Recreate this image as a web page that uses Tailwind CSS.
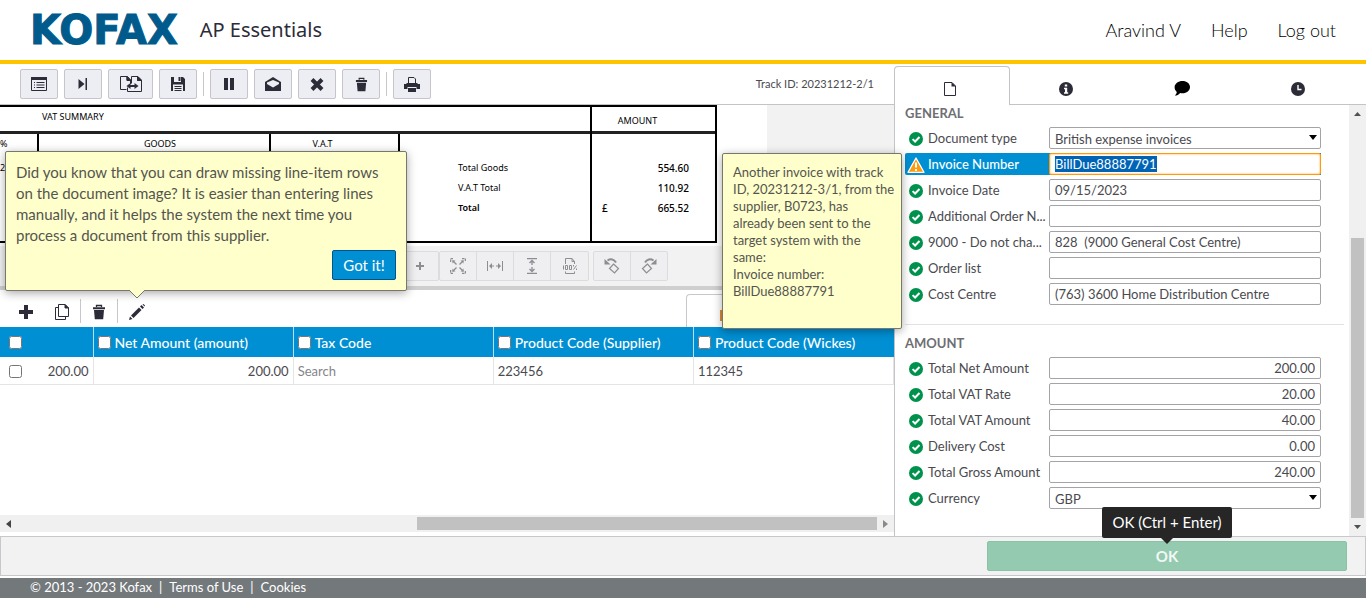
<!DOCTYPE html>
<html lang="en">
<head>
<meta charset="utf-8">
<title>AP Essentials</title>
<script src="https://cdn.jsdelivr.net/npm/@tailwindcss/browser@4"></script>
</head>
<body class="flex h-screen flex-col overflow-hidden bg-white font-['Lato','Open_Sans',sans-serif] text-[13px] text-[#4a4a4f]">
<svg class="hidden">
  <symbol id="ok" viewBox="0 0 14 14"><circle cx="7" cy="7" r="7" fill="#00914d"/><path d="M3.6 7.1 6.1 9.5 10.5 5" fill="none" stroke="#fff" stroke-width="2"/></symbol>
  <symbol id="trash" viewBox="0 0 14 16"><path d="M1 3.2h12v2H1zM2 6h10l-.8 9.2H2.8z" fill="#2c2c38"/><path d="M4.5 3V1.5h5V3" fill="none" stroke="#2c2c38" stroke-width="1.3"/></symbol>
  <symbol id="rot" viewBox="0 0 18 18"><path d="M10.500 7 15.500 11.500 11.500 16 6.500 11.500z" fill="none" stroke="#8d8d92" stroke-width="1.200"/><path d="M13 5.500C11 2 7.500 1.500 4.500 3.500" fill="none" stroke="#8d8d92" stroke-width="2"/><path d="M1.500 2v5.500h6z" fill="#8d8d92"/></symbol>
</svg>

<header class="flex h-16 shrink-0 items-center border-b-4 border-[#ffc400] px-[30px] text-[#2c2c38]">
  <div class="font-['DejaVu_Sans',sans-serif] text-[40px] leading-none font-bold text-[#005b8c] [-webkit-text-stroke:1px_#005b8c]">KOFAX</div>
  <h1 class="ml-[22px] font-['Noto_Sans',sans-serif] text-xl">AP Essentials</h1>
  <nav class="ml-auto flex gap-[30px] text-[18px] font-light text-black">
    <a href="#">Aravind V</a><a href="#">Help</a><a href="#">Log out</a>
  </nav>
</header>

<main class="flex min-h-0 flex-1">
  <section class="relative flex min-w-0 flex-1 flex-col">
    <div class="flex h-[41px] shrink-0 items-center gap-[6px] border-b border-[#c4c4c8] pr-5 pl-5">
      <button aria-label="List" class="grid h-[30px] w-[38px] place-items-center rounded-xs border border-[#c6c6ca] bg-[#edeef4]"><svg class="size-4" viewBox="0 0 16 16" fill="none" stroke="#2c2c38"><path d="M.5 1.5h15v13H.5z"/><path d="M0 2.5h16" stroke-width="3"/><path d="M3 6.5h1M5.5 6.5h8M3 9h1M5.5 9h8M3 11.5h1M5.500 11.5h8"/></svg></button>
      <button aria-label="Next" class="grid h-[30px] w-[38px] place-items-center rounded-xs border border-[#c6c6ca] bg-[#edeef4]"><svg class="h-3 w-[10px]" viewBox="0 0 10 12" fill="#2c2c38"><path d="M.5 1v10L6.500 6zM7.500 0h1.500v12H7.500z"/></svg></button>
      <button aria-label="Transfer" class="grid h-[30px] w-[45px] place-items-center rounded-xs border border-[#c6c6ca] bg-[#edeef4]"><svg class="h-4 w-[22px]" viewBox="0 0 22 16" fill="none" stroke="#2c2c38"><path d="M10.500 8V4L7.500.5h-7v13h6M7 1v3.500h3.500M7.500 11.500v4h14V4L18 .5h-6.500v7M17.500 1v3.500h4"/><path d="M7 .5v4h4zM17.500.5v4h4z" fill="#2c2c38"/><path d="M8 10h9" stroke-width="2"/><path d="M10.500 7v6L6.500 10zM14.500 7v6l4-3z" fill="#2c2c38" stroke="none"/></svg></button>
      <button aria-label="Save" class="grid h-[30px] w-[38px] place-items-center rounded-xs border border-[#c6c6ca] bg-[#edeef4]"><svg class="size-[14px]" viewBox="0 0 14 14"><path d="M0 0h3v5h7V0h2l2 2v12h-2V7.500H2V14H0z" fill="#2c2c38"/><path d="M7.500 0h2v4h-2z" fill="#2c2c38"/><path d="M3.500 9.500h7M3.500 11.500h7M3.500 13.500h7" stroke="#2c2c38"/></svg></button>
      <span class="h-6 w-px bg-[#c8c8cc]"></span>
      <button aria-label="Pause" class="grid h-[30px] w-[38px] place-items-center rounded-xs border border-[#c6c6ca] bg-[#edeef4]"><svg class="h-3 w-[10px]" viewBox="0 0 10 12" fill="#2c2c38"><path d="M0 0h4v12H0zM6 0h4v12H6z"/></svg></button>
      <button aria-label="Mail" class="grid h-[30px] w-[38px] place-items-center rounded-xs border border-[#c6c6ca] bg-[#edeef4]"><svg class="h-[14px] w-4" viewBox="0 0 16 14" fill="#2c2c38"><path d="M0 5 8 0l8 5v9H0z"/><path d="M2 5.500 8 3l6 2.500V7l-6 3.500L2 7z" fill="#edeef4"/></svg></button>
      <button aria-label="Reject" class="grid h-[30px] w-[38px] place-items-center rounded-xs border border-[#c6c6ca] bg-[#edeef4]"><svg class="h-[13px] w-[14px]" viewBox="0 0 14 13"><path d="M2 1.500 12 11.500M12 1.500 2 11.500" stroke="#2c2c38" stroke-width="4"/></svg></button>
      <button aria-label="Delete" class="grid h-[30px] w-[38px] place-items-center rounded-xs border border-[#c6c6ca] bg-[#edeef4]"><svg class="h-[15px] w-[13px]"><use href="#trash"/></svg></button>
      <span class="h-6 w-px bg-[#c8c8cc]"></span>
      <button aria-label="Print" class="grid h-[30px] w-[38px] place-items-center rounded-xs border border-[#c6c6ca] bg-[#edeef4]"><svg class="h-[15px] w-4" viewBox="0 0 16 15"><path d="M4.500 6V.5H10L11.500 2v4" fill="none" stroke="#2c2c38"/><path d="M0 7h2.500V6h11v1H16v5h-3.500v-2h-9v2H0zM4 11h8v4H4z" fill="#2c2c38"/></svg></button>
      <span class="ml-auto text-[11px]">Track ID: 20231212-2/1</span>
    </div>

    <div class="h-[141px] shrink-0 overflow-hidden bg-[#f2f2f2] font-['Noto_Sans',sans-serif] text-[10px] leading-3 text-black">
      <div class="h-full w-[767px] bg-white">
        <div class="flex h-[138px] w-[717px] border-2 border-l-0 border-black">
          <div class="flex flex-1 flex-col">
            <div class="h-[27px] border-b-[3px] border-[#222] pt-1 pl-[42px] text-[9px]">VAT SUMMARY</div>
            <div class="flex flex-1">
              <div class="w-[39px] border-r-2 border-black pt-1 text-[9px]">%<div class="mt-3">20</div></div>
              <div class="w-[232px] border-r-2 border-black pt-1 pl-3 text-center text-[9px]">GOODS</div>
              <div class="w-[129px] border-r-2 border-black pt-1 pr-6 text-center text-[9px]">V.A.T</div>
              <div class="flex flex-col pt-6 pl-[58px] text-[9px] leading-5"><span>Total Goods</span><span>V.A.T Total</span><b class="font-semibold">Total</b></div>
            </div>
          </div>
          <div class="w-[125px] border-l-2 border-black">
            <div class="h-[27px] border-b-[3px] border-[#222] pt-2 pr-8 text-center text-[9px]">AMOUNT</div>
            <div class="flex flex-col pt-6 pr-[26px] text-right leading-5 font-medium"><span>554.60</span><span>110.92</span><span class="flex justify-between pl-[10px]"><span>£</span><span>665.52</span></span></div>
          </div>
        </div>
      </div>
    </div>

    <div class="flex h-11 shrink-0 items-center border-b-4 border-[#cfcfcf] bg-[#f2f2f2] pl-[401px] text-[#8d8d92]">
      <button aria-label="Zoom in" class="grid h-[30px] w-[38px] place-items-center rounded-xs border border-[#dcdce0] bg-[#efeff2]"><svg class="size-2" viewBox="0 0 8 8" stroke="currentColor" stroke-width="2"><path d="M4 0v8M0 4h8"/></svg></button>
      <div class="flex h-[30px] divide-x divide-[#dcdce0] rounded-xs border border-[#dcdce0] bg-[#efeff2]">
        <button aria-label="Fit page" class="grid w-[37px] place-items-center"><svg class="size-4" viewBox="0 0 16 16" fill="none" stroke="currentColor" stroke-width="1.300"><path d="M.6 4V.6H4M12 .6h3.400V4M.6 12v3.400H4M12 15.400h3.400V12" stroke-dasharray="2.400 1"/><path d="m2.500 2.500 4 4M13.500 2.500l-4 4M2.500 13.500l4-4M13.500 13.500l-4-4"/><path d="M2.500 2.500h3l-3 3zM13.500 2.500v3l-3-3zM2.500 13.500v-3l3 3zM13.500 13.500h-3l3-3z" fill="currentColor" stroke="none"/></svg></button>
        <button aria-label="Fit width" class="grid w-[37px] place-items-center"><svg class="h-3 w-4" viewBox="0 0 16 12" fill="none" stroke="currentColor"><path d="M.5 1v10M15.500 1v10M3 6h4M9 6h4" /><path d="M5 3v6L2 6zM11 3v6l3-3z" fill="currentColor" stroke="none"/></svg></button>
        <button aria-label="Fit height" class="grid w-[37px] place-items-center"><svg class="h-4 w-3" viewBox="0 0 12 16" fill="none" stroke="currentColor"><path d="M1 .6h10M1 15.400h10" stroke-width="1.400"/><path d="M6 3v4M6 9v4M3.500 5 6 2.500 8.500 5M3.500 11 6 13.500 8.500 11" stroke-width="1.300"/></svg></button>
        <button aria-label="Actual size" class="grid w-[37px] place-items-center"><svg class="size-4" viewBox="0 0 16 16" fill="none" stroke="currentColor"><path d="M3.500 6V.5h6.500l2.500 3V6M10 .5v3h2.500M3.500 13.500v2h9v-2"/><path d="M1.500 7.500v4M3.500 7.500h2v4h-2zM7.500 7.500h2v4h-2zM11.500 11.500l3-4M11.500 7v1.500M14.500 10.500V12"/></svg></button>
      </div>
      <div class="ml-1 flex h-[30px] divide-x divide-[#dcdce0] rounded-xs border border-[#dcdce0] bg-[#efeff2]">
        <button aria-label="Rotate left" class="grid w-[37px] place-items-center"><svg class="size-[18px]"><use href="#rot"/></svg></button>
        <button aria-label="Rotate right" class="grid w-[36px] place-items-center"><svg class="size-[18px] -scale-x-100"><use href="#rot"/></svg></button>
      </div>
    </div>

    <div class="flex h-[37px] shrink-0 items-center pl-[19px]">
      <button aria-label="Add row" class="mt-[6px]"><svg class="size-[14px]" viewBox="0 0 14 14" stroke="#2c2c38" stroke-width="4"><path d="M7 0v14M0 7h14"/></svg></button>
      <button aria-label="Copy row" class="mt-[6px] ml-[22px]"><svg class="h-4 w-[14px]" viewBox="0 0 14 16" fill="none" stroke="#2c2c38"><path d="M3.500.5H10L13.500 4v8.500h-10z"/><path d="M3.500 3.500h-3v12h10v-3"/><path d="M10 .5V4h3.500z" fill="#2c2c38"/></svg></button>
      <span class="mt-1 ml-[11px] h-6 w-px bg-[#c8c8cc]"></span>
      <button aria-label="Delete row" class="mt-[6px] ml-[11px]"><svg class="h-4 w-[14px]"><use href="#trash"/></svg></button>
      <span class="mt-1 ml-[11px] h-6 w-px bg-[#c8c8cc]"></span>
      <button aria-label="Draw rows" class="mt-[6px] ml-[11px]"><svg class="size-4" viewBox="0 0 16 16" fill="#2c2c38"><path d="M0 16 1 12.500 3.500 15zM2 11.500 10 3.500 12.500 6 4.500 14zM11 2.500 12.500 1 15 3.500 13.500 5zM13.500.5l1-.5L16 1.500l-.5 1z"/></svg></button>
      <div class="mt-1 ml-auto flex h-[33px] w-52 items-center rounded-tl-sm border-t border-l border-[#c8c8cc] pl-[33px]"><span class="mt-2 h-[11px] w-4 border-l-2 border-[#e08a3c] bg-[#3a6c9c]"></span></div>
    </div>

    <table class="w-full shrink-0 table-fixed border-collapse">
      <colgroup><col class="w-[93px]"><col><col><col><col></colgroup>
      <thead>
        <tr class="h-[30px] bg-[#008fd3] text-left text-[14px] text-white">
          <th class="border-r border-[#b8dff2] pl-[9px]"><input type="checkbox" aria-label="Select all" class="block size-[13px]"></th>
          <th class="border-r border-[#b8dff2] pl-1 font-medium"><label class="flex items-center gap-1"><input type="checkbox" class="size-[13px]">Net Amount (amount)</label></th>
          <th class="border-r border-[#b8dff2] pl-1 font-medium"><label class="flex items-center gap-1"><input type="checkbox" class="size-[13px]">Tax Code</label></th>
          <th class="border-r border-[#b8dff2] pl-1 font-medium"><label class="flex items-center gap-1"><input type="checkbox" class="size-[13px]">Product Code (Supplier)</label></th>
          <th class="pl-1 font-medium"><label class="flex items-center gap-1"><input type="checkbox" class="size-[13px]">Product Code (Wickes)</label></th>
        </tr>
      </thead>
      <tbody>
        <tr class="h-[27px] border-b border-[#e4e4e6]">
          <td class="border-r border-[#e4e4e6] pt-[2px] pr-1 pl-[9px]"><div class="flex items-center justify-between"><input type="checkbox" aria-label="Select row" class="size-[13px]"><span>200.00</span></div></td>
          <td class="border-r border-[#e4e4e6] pt-[2px] pr-1 text-right">200.00</td>
          <td class="border-r border-[#e4e4e6] pt-[2px] pl-1 text-[#85858a]">Search</td>
          <td class="border-r border-[#e4e4e6] pt-[2px] pl-1">223456</td>
          <td class="border-r border-[#e4e4e6] pt-[2px] pl-1">112345</td>
        </tr>
      </tbody>
    </table>

    <div class="mt-auto mb-1 flex h-[17px] shrink-0 items-center bg-[#f0f0f0] px-[6px]">
      <svg class="h-2 w-[5px]" viewBox="0 0 5 8"><path d="M5 0v8L0 4z" fill="#444"/></svg>
      <span class="ml-auto h-[13px] w-[460px] bg-[#c1c1c1]"></span>
      <svg class="ml-[6px] h-2 w-[5px]" viewBox="0 0 5 8"><path d="M0 0v8l5-4z" fill="#8a8a8a"/></svg>
    </div>

    <div class="absolute top-[87px] left-[5px] flex h-[140px] w-[402px] flex-col rounded-xs border border-[#77776c] bg-[#ffffcc] p-[10px] shadow-[0_2px_10px_rgba(0,0,0,0.35)]">
      <p class="text-[15px] leading-[21px] whitespace-nowrap text-[#55554f]">Did you know that you can draw missing line-item rows<br>on the document image? It is easier than entering lines<br>manually, and it helps the system the next time you<br>process a document from this supplier.</p>
      <button class="mt-auto h-[30px] w-16 self-end rounded-xs border border-[#00568a] bg-[#008fd3] text-[15px] text-white">Got it!</button>
      <svg class="absolute top-full left-[123px] h-[9px] w-4" viewBox="0 0 16 9"><path d="M0 0 8 8l8-8" fill="#ffffcc" stroke="#77776c"/><path d="M1 0h14" stroke="#ffffcc" stroke-width="2"/></svg>
    </div>

    <div class="absolute top-[89px] right-[-8px] z-10 h-[176px] w-[180px] rounded-xs border border-[#77776c] bg-[#ffffcc] px-[10px] py-[10px] text-[13px] leading-[17px] whitespace-nowrap text-[#55554f] shadow-[0_2px_10px_rgba(0,0,0,0.35)]">Another invoice with track<br>ID, 20231212-3/1, from the<br>supplier, B0723, has<br>already been sent to the<br>target system with the<br>same:<br>Invoice number:<br>BillDue88887791</div>
  </section>

  <aside class="flex w-[472px] shrink-0 flex-col">
    <div class="grid h-[41px] shrink-0 grid-cols-4 border-b border-[#c4c4c8] pt-[2px] pr-2">
      <button aria-label="Document" class="-mb-px grid place-items-center rounded-t-sm border border-b-0 border-[#c4c4c8] bg-white pt-[6px] pr-1"><svg class="h-[14px] w-3" viewBox="0 0 12 14"><path d="M.5.5H8L11.500 4v9.500H.5z" fill="none" stroke="#2c2c38"/><path d="M7.500 0v4.500H12z" fill="#2c2c38"/></svg></button>
      <button aria-label="Info" class="grid place-items-center pt-2 pr-1"><svg class="size-[14px]" viewBox="0 0 14 14"><circle cx="7" cy="7" r="7" fill="#2c2c38"/><path d="M5.800 2.500h2.400v2H5.800zM5 5.800h3.200v4.400h1v1.500H5v-1.500h1V7.200H5z" fill="#fff"/></svg></button>
      <button aria-label="Comments" class="grid place-items-center pt-[6px] pr-1"><svg class="h-[15px] w-4" viewBox="0 0 16 15"><path d="M8.500 0C12.700 0 16 2.600 16 6s-3.300 6.300-7.500 6.300c-.8 0-1.600-.1-2.300-.3C4.800 13.600 3 14.600.8 14.600c1.200-1.200 1.800-2.400 2-3.700C1.200 9.700.6 8 .6 6.100.6 2.700 4.300 0 8.500 0z"/></svg></button>
      <button aria-label="History" class="grid place-items-center pt-2 pr-1"><svg class="size-[14px]" viewBox="0 0 14 14"><circle cx="7" cy="7" r="7" fill="#2c2c38"/><path d="M7 3v4.500h3.500" fill="none" stroke="#fff" stroke-width="1.400"/></svg></button>
    </div>
    <div class="flex min-h-0 flex-1 border-l border-[#c4c4c8]">
      <form class="min-w-0 flex-1 pr-[5px] pl-[10px]">
        <h2 class="flex h-[22px] items-center pb-1 text-[13px] font-bold text-[#6e6e73]">GENERAL</h2>
        <div class="flex flex-col gap-1 border-b border-[#e2e2e4] pr-[23px] pb-[19px]">
          <div class="flex h-[22px] items-center"><svg class="mx-1 mt-[2px] size-[14px] shrink-0"><use href="#ok"/></svg><label for="f1" class="min-w-0 flex-1 pt-[2px] pl-px">Document type</label><div class="relative w-[272px]"><select id="f1" class="block h-[22px] w-full appearance-none rounded-xs border border-[#a4a4a8] bg-white px-[5px] pt-[2px]"><option>British expense invoices</option></select><svg class="pointer-events-none absolute top-2 right-1 h-[5px] w-2" viewBox="0 0 8 5"><path d="M0 0h8L4 5z"/></svg></div></div>
          <div class="flex h-[22px] items-center rounded-l-xs bg-[#008fd3] text-white"><svg class="mx-[2px] mt-[2px] h-4 w-[18px] shrink-0" viewBox="0 0 18 16"><path d="M9 1 17 15.300H1z" fill="#ff9a0c" stroke="#fff" stroke-width="1.300" stroke-linejoin="round"/><path d="M9 5.500v5M9 12v2" stroke="#fff" stroke-width="2"/></svg><label for="f2" class="min-w-0 flex-1 pt-[2px] pl-px font-medium">Invoice Number</label><input id="f2" value="BillDue88887791" class="h-[22px] w-[272px] rounded-xs border border-[#ff9a0c] bg-white px-[5px] text-[#4a4a4f] shadow-[inset_0_0_2px_#ff9a0c] outline-none selection:bg-[#0064b6] selection:text-white"></div>
          <div class="flex h-[22px] items-center"><svg class="mx-1 mt-[2px] size-[14px] shrink-0"><use href="#ok"/></svg><label for="f3" class="min-w-0 flex-1 pt-[2px] pl-px">Invoice Date</label><input id="f3" value="09/15/2023" class="h-[22px] w-[272px] rounded-xs border border-[#a4a4a8] px-[5px]"></div>
          <div class="flex h-[22px] items-center"><svg class="mx-1 mt-[2px] size-[14px] shrink-0"><use href="#ok"/></svg><label for="f4" class="min-w-0 flex-1 pt-[2px] pl-px whitespace-nowrap">Additional Order N...</label><input id="f4" class="h-[22px] w-[272px] rounded-xs border border-[#a4a4a8] px-[5px]"></div>
          <div class="flex h-[22px] items-center"><svg class="mx-1 mt-[2px] size-[14px] shrink-0"><use href="#ok"/></svg><label for="f5" class="min-w-0 flex-1 pt-[2px] pl-px whitespace-nowrap">9000 - Do not cha...</label><input id="f5" value="828  (9000 General Cost Centre)" class="h-[22px] w-[272px] rounded-xs border border-[#a4a4a8] px-[5px]"></div>
          <div class="flex h-[22px] items-center"><svg class="mx-1 mt-[2px] size-[14px] shrink-0"><use href="#ok"/></svg><label for="f6" class="min-w-0 flex-1 pt-[2px] pl-px">Order list</label><input id="f6" class="h-[22px] w-[272px] rounded-xs border border-[#a4a4a8] px-[5px]"></div>
          <div class="flex h-[22px] items-center"><svg class="mx-1 mt-[2px] size-[14px] shrink-0"><use href="#ok"/></svg><label for="f7" class="min-w-0 flex-1 pt-[2px] pl-px">Cost Centre</label><input id="f7" value="(763) 3600 Home Distribution Centre" class="h-[22px] w-[272px] rounded-xs border border-[#a4a4a8] px-[5px]"></div>
        </div>
        <h2 class="flex h-8 items-center pt-[6px] text-[13px] font-bold text-[#6e6e73]">AMOUNT</h2>
        <div class="flex flex-col gap-1 pr-[23px]">
          <div class="flex h-[22px] items-center"><svg class="mx-1 mt-[2px] size-[14px] shrink-0"><use href="#ok"/></svg><label for="a1" class="min-w-0 flex-1 pt-[2px] pl-px">Total Net Amount</label><input id="a1" value="200.00" class="h-[22px] w-[272px] rounded-xs border border-[#a4a4a8] px-[5px] text-right"></div>
          <div class="flex h-[22px] items-center"><svg class="mx-1 mt-[2px] size-[14px] shrink-0"><use href="#ok"/></svg><label for="a2" class="min-w-0 flex-1 pt-[2px] pl-px">Total VAT Rate</label><input id="a2" value="20.00" class="h-[22px] w-[272px] rounded-xs border border-[#a4a4a8] px-[5px] text-right"></div>
          <div class="flex h-[22px] items-center"><svg class="mx-1 mt-[2px] size-[14px] shrink-0"><use href="#ok"/></svg><label for="a3" class="min-w-0 flex-1 pt-[2px] pl-px">Total VAT Amount</label><input id="a3" value="40.00" class="h-[22px] w-[272px] rounded-xs border border-[#a4a4a8] px-[5px] text-right"></div>
          <div class="flex h-[22px] items-center"><svg class="mx-1 mt-[2px] size-[14px] shrink-0"><use href="#ok"/></svg><label for="a4" class="min-w-0 flex-1 pt-[2px] pl-px">Delivery Cost</label><input id="a4" value="0.00" class="h-[22px] w-[272px] rounded-xs border border-[#a4a4a8] px-[5px] text-right"></div>
          <div class="flex h-[22px] items-center"><svg class="mx-1 mt-[2px] size-[14px] shrink-0"><use href="#ok"/></svg><label for="a5" class="min-w-0 flex-1 pt-[2px] pl-px">Total Gross Amount</label><input id="a5" value="240.00" class="h-[22px] w-[272px] rounded-xs border border-[#a4a4a8] px-[5px] text-right"></div>
          <div class="flex h-[22px] items-center"><svg class="mx-1 mt-[2px] size-[14px] shrink-0"><use href="#ok"/></svg><label for="a6" class="min-w-0 flex-1 pt-[2px] pl-px">Currency</label><div class="relative w-[272px]"><select id="a6" class="block h-[22px] w-full appearance-none rounded-xs border border-[#a4a4a8] bg-white px-[5px] pt-[2px]"><option>GBP</option></select><svg class="pointer-events-none absolute top-2 right-1 h-[5px] w-2" viewBox="0 0 8 5"><path d="M0 0h8L4 5z"/></svg></div></div>
        </div>
      </form>
      <div class="flex w-[17px] shrink-0 flex-col items-center bg-[#f0f0f0] py-[7px]">
        <svg class="h-1 w-[7px]" viewBox="0 0 7 4"><path d="M0 4h7L3.500 0z" fill="#505050"/></svg>
        <span class="mt-auto mb-[7px] h-[280px] w-[13px] bg-[#c1c1c1]"></span>
        <svg class="h-1 w-[7px]" viewBox="0 0 7 4"><path d="M0 0h7L3.500 4z" fill="#505050"/></svg>
      </div>
    </div>
  </aside>
</main>

<div class="mb-[2px] flex h-10 shrink-0 items-center justify-end border border-[#c8c8cc] bg-[#f2f2f2] pr-[18px]">
  <div class="relative">
    <button class="block h-[30px] w-[360px] rounded-xs border border-[#88c3a5] bg-[#93cab0] text-[15px] font-bold text-[#f2f8f5]">OK</button>
    <div role="tooltip" class="absolute bottom-[33px] left-1/2 flex h-[31px] w-[130px] -translate-x-1/2 items-center justify-center rounded-xs bg-[#262626] text-[15px] whitespace-nowrap text-white">OK (Ctrl + Enter)
      <svg class="absolute top-full left-[59px] h-[6px] w-3" viewBox="0 0 12 6"><path d="M0 0h12L6 6z" fill="#262626"/></svg></div>
  </div>
</div>
<footer class="flex h-5 shrink-0 items-center gap-[7px] bg-[#73787b] px-[30px] text-[13px] text-white"><span>© 2013 - 2023 Kofax</span><span>|</span><a href="#">Terms of Use</a><span>|</span><a href="#">Cookies</a></footer>
<script>
  const field = document.getElementById('f2');
  field.focus();
  field.select();
</script>
</body>
</html>
